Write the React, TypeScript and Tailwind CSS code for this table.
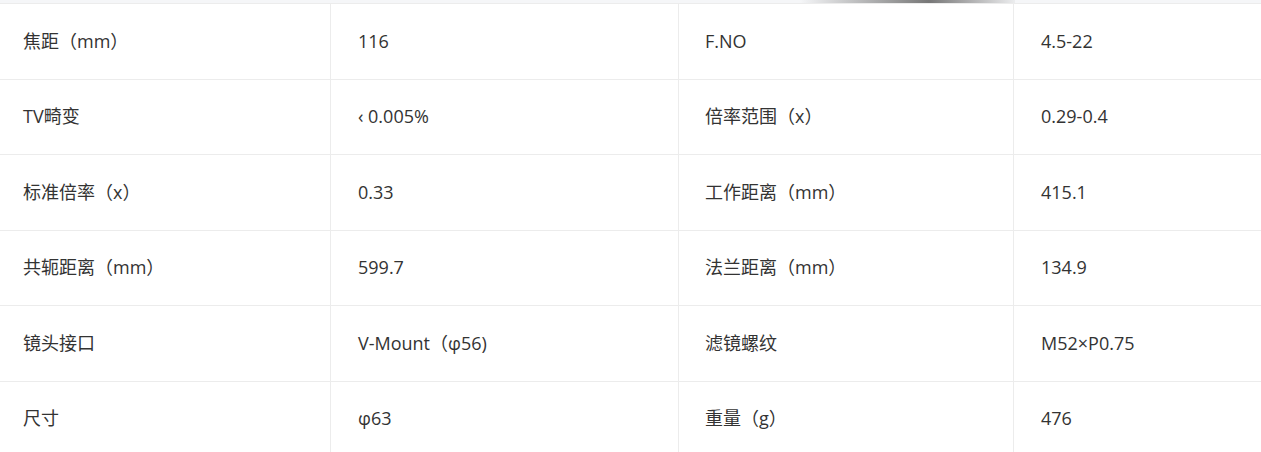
import React from "react";

const rows: [string, string, string, string][] = [
  ["焦距（mm）", "116", "F.NO", "4.5-22"],
  ["TV畸变", "‹ 0.005%", "倍率范围（x）", "0.29-0.4"],
  ["标准倍率（x）", "0.33", "工作距离（mm）", "415.1"],
  ["共轭距离（mm）", "599.7", "法兰距离（mm）", "134.9"],
  ["镜头接口", "V-Mount（φ56)", "滤镜螺纹", "M52×P0.75"],
  ["尺寸", "φ63", "重量（g）", "476"],
];

export default function App() {
  return (
    <div className="w-[1261px] h-[452px] overflow-hidden bg-white text-[#333] text-[18px] font-['Open_Sans','Noto_Sans_CJK_SC',sans-serif]">
      <div className="relative h-[4px] bg-[#f5f6f8] border-b border-[#ececec]">
        <div className="absolute left-[800px] top-0 h-[3px] w-[215px] bg-[linear-gradient(90deg,rgba(160,160,160,0),#777_60%,rgba(200,200,200,0.2))]" />
      </div>
      {rows.map((r, i) => (
        <div
          key={i}
          className="grid grid-cols-[331px_348px_335px_1fr] h-[75.5px] border-b border-[#ececec]"
        >
          <div className="flex items-center pl-[23px] border-r border-[#ececec]">{r[0]}</div>
          <div className="flex items-center pl-[27px] border-r border-[#ececec]">{r[1]}</div>
          <div className="flex items-center pl-[26px] border-r border-[#ececec]">{r[2]}</div>
          <div className="flex items-center pl-[27px]">{r[3]}</div>
        </div>
      ))}
    </div>
  );
}
